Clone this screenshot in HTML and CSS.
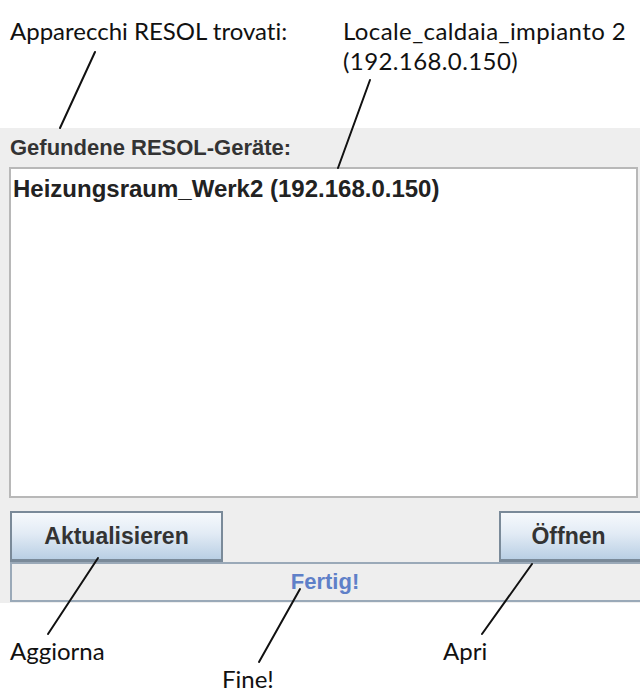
FILE: index.html
```html
<!DOCTYPE html>
<html lang="de">
<head>
<meta charset="utf-8">
<title>RESOL</title>
<link rel="stylesheet" href="styles.css">
</head>
<body>
<div class="page">
  <div class="notes-top">
    <div class="note note-left">Apparecchi RESOL trovati:</div>
    <div class="note note-right">Locale_caldaia_impianto 2<br>(192.168.0.150)</div>
  </div>
  <div class="panel">
    <div class="panel-label">Gefundene RESOL-Geräte:</div>
    <div class="list">
      <div class="list-item">Heizungsraum_Werk2 (192.168.0.150)</div>
    </div>
    <div class="buttons">
      <button class="btn btn-left">Aktualisieren</button>
      <button class="btn btn-right">Öffnen</button>
    </div>
    <div class="status">Fertig!</div>
  </div>
  <div class="notes-bottom">
    <div class="note note-aggiorna">Aggiorna</div>
    <div class="note note-fine">Fine!</div>
    <div class="note note-apri">Apri</div>
  </div>
  <svg class="leaders" width="640" height="693" viewBox="0 0 640 693">
    <g stroke="#111" stroke-width="2" stroke-linecap="round">
      <line x1="95" y1="52" x2="60" y2="128"/>
      <line x1="370" y1="80" x2="338" y2="168"/>
      <line x1="98" y1="558" x2="48" y2="634"/>
      <line x1="300" y1="589" x2="259" y2="662"/>
      <line x1="532" y1="564" x2="482" y2="634"/>
    </g>
  </svg>
</div>
</body>
</html>
```
FILE: styles.css
```css
html, body {
  margin: 0;
  padding: 0;
  background: #ffffff;
}
.page {
  position: relative;
  width: 640px;
  height: 693px;
  overflow: hidden;
  display: flex;
  flex-direction: column;
}
.note {
  font-family: Lato, "Open Sans", sans-serif;
  font-size: 24px;
  line-height: 28px;
  color: #111;
  white-space: nowrap;
  font-variant-ligatures: none;
}
.notes-top {
  height: 128px;
  display: flex;
  padding-left: 10px;
  padding-top: 17px;
  box-sizing: border-box;
}
.note-left {
  width: 333px;
}
.note-right {
  line-height: 30px;
  margin-top: -1px;
  letter-spacing: 0.4px;
}
.panel {
  background: #eeeeee;
  display: flex;
  flex-direction: column;
  padding-left: 9px;
  padding-right: 2px;
  height: 475px;
  box-sizing: border-box;
}
.panel-label {
  height: 39px;
  display: flex;
  align-items: center;
  padding-left: 1px;
  font-family: "Liberation Sans", Arial, sans-serif;
  font-weight: bold;
  font-size: 22px;
  color: #333;
}
.list {
  height: 331px;
  background: #fff;
  border: 2px solid #b8b8b8;
  box-sizing: border-box;
  padding: 6px 2px;
}
.list-item {
  font-family: "Liberation Sans", Arial, sans-serif;
  font-weight: bold;
  font-size: 24px;
  line-height: 28px;
  color: #222;
}
.buttons {
  margin-top: 13px;
  display: flex;
  justify-content: space-between;
  margin-left: 1px;
  margin-right: -2px;
}
.btn {
  height: 51px;
  border: 2px solid #7a8a99;
  border-bottom-width: 3px;
  background: linear-gradient(#f6f9fc, #e2ebf5 45%, #b9cfe4);
  font-family: "Liberation Sans", Arial, sans-serif;
  font-weight: bold;
  font-size: 23px;
  color: #333;
  padding: 0;
  box-sizing: border-box;
}
.btn-left {
  width: 213px;
}
.btn-right {
  width: 141px;
  border-right: 0;
  padding-right: 4px;
}
.status {
  height: 40px;
  margin-left: 1px;
  margin-right: -2px;
  border: 2px solid #9aa9b8;
  border-right: 0;
  box-sizing: border-box;
  display: flex;
  align-items: center;
  justify-content: center;
  font-family: "Liberation Sans", Arial, sans-serif;
  font-weight: bold;
  font-size: 22px;
  color: #5f80c8;
  padding-right: 2px;
}
.notes-bottom {
  flex: 1;
  display: grid;
  grid-template-columns: 212px 221px 1fr;
  grid-template-rows: 28px 28px;
  padding-left: 10px;
  padding-top: 34px;
}
.note-aggiorna {
  grid-column: 1;
  grid-row: 1;
}
.note-fine {
  grid-column: 2;
  grid-row: 2;
}
.note-apri {
  grid-column: 3;
  grid-row: 1;
}
.leaders {
  position: absolute;
  left: 0;
  top: 0;
  pointer-events: none;
}
```
